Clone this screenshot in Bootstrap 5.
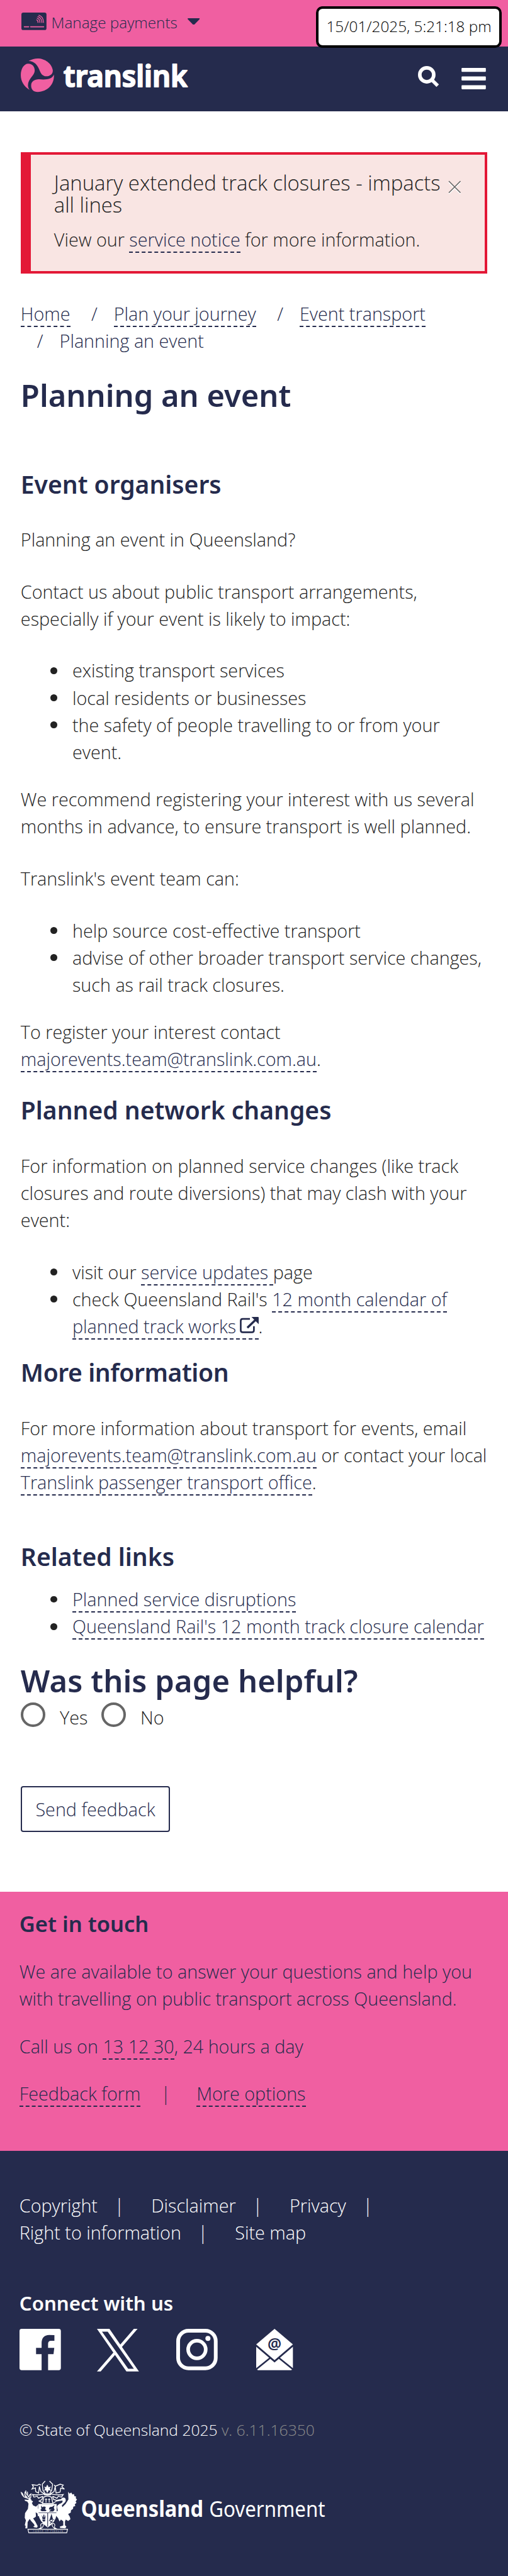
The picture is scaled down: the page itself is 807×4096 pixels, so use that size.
<!DOCTYPE html>
<html lang="en">
<head>
<meta charset="utf-8">
<meta name="viewport" content="width=device-width, initial-scale=1">
<title>Planning an event | Translink</title>
<link href="https://cdn.jsdelivr.net/npm/bootstrap@5.3.0/dist/css/bootstrap.min.css" rel="stylesheet">
<style>
:root{--navy:#252b4d;--pink:#f05fa1;--red:#e31836}
html{font-size:20.534px}
body{font-family:"Open Sans",sans-serif;font-weight:300;font-size:1.4rem;line-height:2.1rem;color:#222;background:#fff;overflow-x:hidden}
h1,h2,.h-title{font-family:"Noto Sans","Open Sans",sans-serif;font-weight:600;color:var(--navy);margin:0}
h1,.h-big{font-size:2.38rem;line-height:2.88rem}
.h-big{margin-top:1.7rem;letter-spacing:.005rem}
h2{font-size:1.9rem;line-height:1.9rem;margin-bottom:2.32rem}
h2.snug{letter-spacing:-.02rem}
p{margin-bottom:1.925rem}
ul{margin-bottom:1.57rem}
.bullets{padding-left:4rem;list-style:none}
.bullets li{position:relative}
.bullets li::before{content:"";position:absolute;left:-1.7rem;top:.8rem;width:.52rem;height:.52rem;border-radius:50%;background:#222}
a{color:var(--navy);text-decoration:none}
.dash{border-bottom:.1rem dashed var(--navy)}
.gutter{padding-left:1.6rem;padding-right:1.6rem}
.gutter-foot{padding-left:1.5rem;padding-right:1.5rem}
.topbar{background:var(--pink);height:3.6rem;font-size:1.184rem;color:var(--navy)}
.topbar .card-ico{width:1.94rem;height:1.36rem;margin:.97rem .38rem 0 .05rem}
.topbar .lbl{margin-top:.68rem}
.topbar .caret{width:.94rem;height:.52rem;margin:1.4rem 0 0 .8rem}
.clock{position:absolute;top:.5rem;right:.5rem;width:14.33rem;height:3.2rem;border:.2rem solid #000;border-radius:.5rem;background:#fff;color:#000;font-size:1.184rem;line-height:2.72rem}
.masthead{background:var(--navy);height:5rem}
.masthead .logo{width:13rem;height:2.6rem;margin-top:.95rem}
.masthead .search{width:1.66rem;height:1.67rem;margin:1.53rem 1.67rem 0 0}
.masthead .burger{width:1.9rem;height:1.65rem;margin:1.68rem .13rem 0 0}
.notice{margin:3.2rem 1.6rem 0;height:9.4rem;border:.2rem solid var(--red);border-left-width:.8rem;border-radius:0;background:#f9e5e3;color:#222;padding:1.32rem 1.85rem 0 1.8rem}
.notice .ttl{font-size:1.6rem;line-height:1.71rem;margin-bottom:.77rem}
.notice .x-ico{width:1rem;height:1rem;margin-top:.65rem;overflow:visible}
.crumbs{margin:2.01rem 0 0;height:4.2rem;padding:0;list-style:none;color:var(--navy)}
.crumbs li{display:inline}
.crumbs li+li::before{content:"/";padding:0 1.265rem}
.content h1{margin-top:1.75rem;margin-bottom:4.48rem}
.content h1+h2{margin-bottom:2.3rem}
.ext{width:1.46rem;height:1.26rem;vertical-align:-.02rem;margin-left:-.1rem}
.related{padding-top:1.83rem}
.related h2{margin-bottom:1.32rem}
.opts{height:2.1rem}
.ring{appearance:none;width:1.9rem;height:1.9rem;border:.2rem solid #666;border-radius:50%;background:#fff;margin:.25rem 1.13rem 0 0}
.opts label{margin:.37rem 1.04rem 0 0}
.btn-send{--bs-btn-color:var(--navy);--bs-btn-border-color:var(--navy);font-weight:300;font-size:1.4rem;line-height:2.1rem;border-width:.1rem;border-radius:.2rem;width:11.56rem;height:3.57rem;padding:0;margin-top:4.62rem;margin-bottom:4.64rem;display:block}
.touch{background:var(--pink);height:20.07rem;padding-top:1.65rem;color:var(--navy)}
.touch h2{font-size:1.68rem;line-height:1.7rem;margin-bottom:1.76rem}
.touch p{margin-bottom:1.58rem}
.touch .bar{margin:0 2rem 0 1.57rem}
.foot{background:var(--navy);color:#fff;height:32.9rem;padding-top:3.15rem}
.foot a{color:#fff}
.foot .bar{margin:0 2.1rem 0 1.3rem}
.foot .h-title{color:#fff;font-size:1.52rem;line-height:1.6rem;margin-top:3.62rem}
.social{margin-top:1.18rem;height:3.3rem}
.social svg{height:3.2rem;width:3.2rem;overflow:visible}
.social .so-x{width:3.25rem;height:3.3rem;margin:0 2.9rem 0 2.8rem}
.social .so-mail{width:2.84rem;margin-left:2.95rem}
.legal{font-size:1.2rem;line-height:1.8rem;margin-top:3.66rem}
.legal span{color:#8b8b8b}
.gov{margin-top:2.81rem;width:25rem;height:4.5rem;margin-left:-.17rem;overflow:visible}
svg{display:block}
svg.ext{display:inline-block}
</style>
</head>
<body>
<header class="position-relative">
  <div class="topbar gutter d-flex align-items-start">
    <svg class="card-ico" viewBox="0 0 175 122"><rect width="175" height="122" rx="14" fill="#252b4d"/><g fill="none" stroke="#f05fa1" stroke-linecap="round"><path d="M20 99H51M64 99H156" stroke-width="7"/><path d="M107 51q10 4 9 18M110 39q19 5 19 30M115 28q26 8 28 41M122 18q31 10 32 51" stroke-width="6"/></g></svg>
    <span class="lbl">Manage payments</span>
    <svg class="caret" viewBox="0 0 84 46"><path d="M4 0h76q6 2 2 7L47 43q-5 4-10 0L2 7Q-2 2 4 0z" fill="#252b4d"/></svg>
  </div>
  <div class="clock text-center">15/01/2025, 5:21:18 pm</div>
  <nav class="masthead gutter d-flex align-items-start">
    <svg class="logo" viewBox="0 0 1170 234" role="img" aria-label="Translink">
      <g fill="#f05fa1"><path d="M54 18C78 5 96 0 118 0c50 0 98 35 105 82 2 26-20 42-46 42-20 0-34-12-43-34C118 48 96 18 54 18z"/><path d="M52 36c30 0 45 22 45 48 0 34-46 56-47 102 0 16 5 24 12 33C22 196 0 158 0 116 0 72 22 36 52 36z"/><path d="M231 112c4 70-46 120-113 121-30 0-46-18-46-45 0-28 24-42 54-43 48 4 92 2 105-33z"/></g>
      <text x="298" y="197" textLength="862" lengthAdjust="spacingAndGlyphs" font-family="Noto Sans" font-weight="600" font-size="208" fill="#fff" stroke="#fff" stroke-width="9" stroke-linejoin="round">translink</text>
    </svg>
    <svg class="search ms-auto" viewBox="0 0 149 150"><circle cx="61" cy="61" r="48.5" fill="none" stroke="#fff" stroke-width="25"/><path d="M101 101l36 36" stroke="#fff" stroke-width="24"/></svg>
    <svg class="burger" viewBox="0 0 171 150" fill="#fff"><rect width="171" height="28" rx="5"/><rect y="60" width="171" height="29" rx="5"/><rect y="122" width="171" height="28" rx="5"/></svg>
  </nav>
</header>

<div class="notice alert d-flex align-items-start mb-0" role="alert">
  <div class="flex-grow-1">
    <div class="ttl">January extended track closures - impacts<br>all lines</div>
    <div>View our <a href="#" class="dash">service notice</a> for more information.</div>
  </div>
  <svg class="x-ico" viewBox="0 0 10 10" fill="none"><path d="M.5 1.300l9 9M9.500 1.300l-9 9" stroke="#fff" stroke-width="1"/><path d="M.5.5l9 9M9.500.5l-9 9" stroke="#666" stroke-width=".8"/></svg>
</div>

<main class="gutter content">
  <ul class="crumbs">
    <li><a href="#" class="dash">Home</a></li>
    <li><a href="#" class="dash">Plan your journey</a></li>
    <li><a href="#" class="dash">Event transport</a><br></li>
    <li>Planning an event</li>
  </ul>
  <h1>Planning an event</h1>
  <h2>Event organisers</h2>
  <p>Planning an event in Queensland?</p>
  <p>Contact us about public transport arrangements, especially if your event is likely to impact:</p>
  <ul class="bullets">
    <li>existing transport services</li>
    <li>local residents or businesses</li>
    <li>the safety of people travelling to or from your event.</li>
  </ul>
  <p>We recommend registering your interest with us several months in advance, to ensure transport is well planned.</p>
  <p>Translink's event team can:</p>
  <ul class="bullets">
    <li>help source cost-effective transport</li>
    <li>advise of other broader transport service changes, such as rail track closures.</li>
  </ul>
  <p>To register your interest contact <a href="#" class="dash">majorevents.team@translink.com.au</a>.</p>
  <h2>Planned network changes</h2>
  <p>For information on planned service changes (like track closures and route diversions) that may clash with your event:</p>
  <ul class="bullets">
    <li>visit our <a href="#" class="dash">service updates </a>page</li>
    <li>check Queensland Rail's <a href="#" class="dash">12 month calendar of planned track works <svg class="ext" viewBox="0 0 146 126"><path d="M78 15H22Q7 15 7 30V104Q7 119 22 119H94Q109 119 109 104V72" fill="none" stroke="#252b4d" stroke-width="13"/><path d="M58 84l62-60" stroke="#252b4d" stroke-width="17"/><path d="M90 0h50q6 0 6 6v50z" fill="#252b4d"/></svg></a>.</li>
  </ul>
  <h2 class="snug">More information</h2>
  <p>For more information about transport for events, email <a href="#" class="dash">majorevents.team@translink.com.au</a> or contact your local <a href="#" class="dash">Translink passenger transport office</a>.</p>
  <section class="related">
    <h2>Related links</h2>
    <ul class="bullets mb-0">
      <li><a href="#" class="dash">Planned service disruptions</a></li>
      <li><a href="#" class="dash">Queensland Rail's 12 month track closure calendar</a></li>
    </ul>
  </section>
  <form>
    <div class="h-title h-big">Was this page helpful?</div>
    <div class="opts d-flex align-items-start">
      <input class="ring" type="radio" name="helpful" id="y"><label for="y">Yes</label>
      <input class="ring" type="radio" name="helpful" id="n"><label for="n">No</label>
    </div>
    <button type="button" class="btn btn-send">Send feedback</button>
  </form>
</main>

<section class="touch gutter-foot">
  <h2>Get in touch</h2>
  <p>We are available to answer your questions and help you with travelling on public transport across Queensland.</p>
  <p>Call us on <a href="#" class="dash">13 12 30</a>, 24 hours a day</p>
  <div><a href="#" class="dash">Feedback form</a><span class="bar">|</span><a href="#" class="dash">More options</a></div>
</section>

<footer class="foot gutter-foot">
  <div class="d-flex"><a href="#">Copyright</a><span class="bar">|</span><a href="#">Disclaimer</a><span class="bar">|</span><a href="#">Privacy</a><span class="bar">|</span></div>
  <div class="d-flex"><a href="#">Right to information</a><span class="bar">|</span><a href="#">Site map</a></div>
  <div class="h-title">Connect with us</div>
  <div class="social d-flex">
    <svg viewBox="0 0 32 32"><path d="M1.700 0H30.300Q32 0 32 1.700V30.300Q32 32 30.300 32H22.100V19.600H26.300L26.900 14.700H22.100V11.600Q22.100 9.300 24.400 9.300H27V4.900Q25 4.700 23 4.700Q17.100 4.900 17.100 11V14.700H12.800V19.600H17.100V32H1.700Q0 32 0 30.300V1.700Q0 0 1.700 0z" fill="#fff"/></svg>
    <svg class="so-x" viewBox="0 0 1200 1227" preserveAspectRatio="none"><path fill="#fff" d="M714.163 519.284L1160.890 0H1055.030L667.137 450.887L357.328 0H0L468.492 681.821L0 1226.370H105.866L515.491 750.218L842.672 1226.370H1200L714.137 519.284H714.163ZM569.165 687.828L521.697 619.934L144.011 79.694H306.615L611.412 515.685L658.880 583.579L1055.080 1150.300H892.476L569.165 687.854V687.828Z"/></svg>
    <svg viewBox="0 0 32 32"><rect x="1.450" y="1.450" width="29.100" height="29.100" rx="8" fill="none" stroke="#fff" stroke-width="2.900"/><circle cx="16" cy="16" r="6.800" fill="none" stroke="#fff" stroke-width="2.800"/><circle cx="24.500" cy="7.450" r="1.950" fill="#fff"/></svg>
    <svg class="so-mail" viewBox="0 0 28.400 32" fill="#fff"><path d="M14.200 0L28.400 12.100L14.200 24.200L0 12.100z"/><path d="M0 13.900L10 22.400L0 30.400zM28.400 13.900L18.400 22.400L28.400 30.400zM10.900 23.200L14.200 26L17.500 23.200L27.700 31.500Q27.400 32 26.800 32H1.600Q1 32 .7 31.500z"/><text x="14.200" y="15.900" text-anchor="middle" font-family="Noto Sans" font-weight="600" font-size="12" fill="#252b4d">@</text></svg>
  </div>
  <div class="legal">© State of Queensland 2025 <span>v. 6.11.16350</span></div>
  <svg class="gov" viewBox="0 0 2250 405" fill="#fff">
    <!-- stag -->
    <path d="M52 151L80 153Q78 143 90 144L96 149Q104 150 100 158L111 162Q112 170 103 174L112 192L132 200L146 186V210L152 228L158 262L146 268L142 248L130 240L132 268Q122 280 112 282L128 306Q136 322 144 336L140 346Q120 348 112 340Q128 336 118 322L98 300L88 286L74 308L72 352H58L60 334L54 330L62 296L54 278L56 246L76 216L80 180L72 166L56 160z"/>
    <path d="M86 146Q62 138 48 132Q32 118 28 98M46 130Q44 118 34 104M60 136Q52 116 56 96M72 140L62 124M92 146Q78 126 64 110Q58 98 62 88M74 118L72 96M94 142L98 116M84 132L86 120L100 110" fill="none" stroke="#fff" stroke-width="6"/>
    <!-- brolga -->
    <path d="M356 96L366 110L378 102L386 116L396 112L400 128L410 128L410 144L418 150L408 164L414 174L402 184L406 196L392 200L390 216L376 226L374 242L356 252L368 272L372 288L356 300L340 290L334 304V330L344 340L336 352L300 348L298 340L322 332V302L306 290L296 304L286 280L270 262L264 244L284 228L278 200Q286 184 306 178Q322 168 316 158L298 160L278 164L280 152L306 148Q318 132 334 140Q344 152 336 168L312 192L316 204L338 182L358 150z"/>
    <!-- helm and mantling -->
    <g fill="none" stroke="#fff" stroke-width="6"><path d="M196 22L176 44L180 84L196 108M226 22L248 44L242 84L228 108M166 50L154 44L142 52L106 48L114 62L104 78L128 70L130 96L150 106L156 60L166 96L190 110M258 50L268 58L300 44L322 50L312 62L330 78L304 72L300 98L272 106L266 60L258 96L234 110M188 112Q150 122 108 116L118 134L140 128L150 142L180 128M236 112Q280 122 322 116L310 134L288 128L278 142L248 128M180 128L174 150L154 162L172 170L182 180M248 128L254 150L280 158L262 170L248 180"/><path d="M186 134Q211 118 240 134L250 178H178z"/></g>
    <path d="M184 108H240L236 120H188zM190 60L202 66L208 50L214 50L220 66L236 60L228 76L238 90L220 86L214 102H208L202 86L188 90L196 76z"/>
    <path d="M202 142v30M194 150h16M224 142v30M216 150h16" stroke="#fff" stroke-width="5"/>
    <!-- shield -->
    <path d="M148 182H276V250Q270 310 214 346Q158 310 148 250z"/>
    <g fill="#252b4d"><path d="M150 242H274V246H150zM211 246H216V340H211z"/><path d="M166 192L176 204Q190 194 200 204L196 220L206 226L198 232H172L162 224L170 216zM222 216Q226 198 244 202L262 190L256 208L262 222L252 234H222L240 218L228 222zM228 288L240 250L250 286L262 294Q236 286 220 302zM172 258L182 278L184 256H190L192 278L202 258L196 288H178zM176 292H198L194 304H180z"/></g>
    <path d="M228 298L250 316M250 296L230 318" stroke="#252b4d" stroke-width="5"/>
    <!-- motto scroll -->
    <path d="M76 358H352L346 383H82zM146 358Q176 350 164 330Q168 314 184 318Q190 340 160 356M282 358Q252 350 264 330Q260 314 246 318Q238 340 268 356" fill="none" stroke="#fff" stroke-width="5"/>
    <text x="112" y="377" font-family="Noto Sans" font-size="15" textLength="206">AUDAX AT FIDELIS</text>
    <text x="446" y="272" textLength="852" lengthAdjust="spacingAndGlyphs" font-family="Noto Sans" font-weight="700" font-size="155">Queensland</text>
    <text x="1338" y="272" textLength="808" lengthAdjust="spacingAndGlyphs" font-family="Noto Sans" font-weight="400" font-size="155">Government</text>
  </svg>
</footer>
<script src="https://cdn.jsdelivr.net/npm/bootstrap@5.3.0/dist/js/bootstrap.bundle.min.js"></script>
</body>
</html>
